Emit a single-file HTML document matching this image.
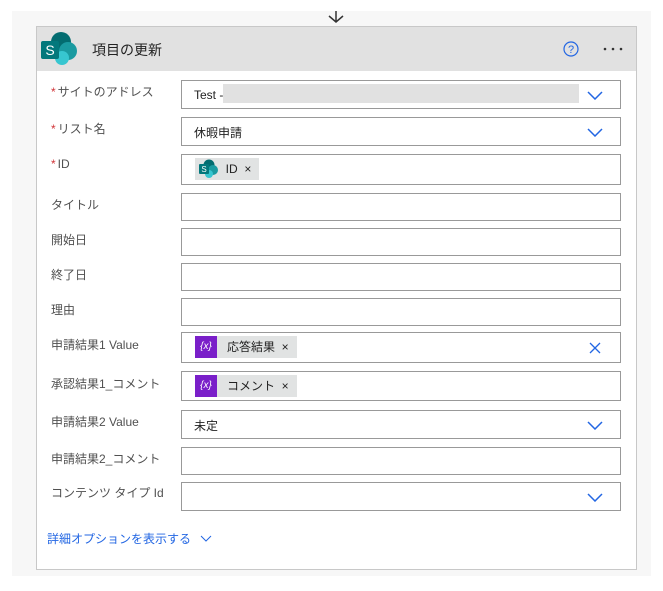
<!DOCTYPE html><html><head><meta charset="utf-8"><style>
body{margin:0;width:663px;height:591px;background:#fff;font-family:"Liberation Sans","Noto Sans CJK JP",sans-serif;position:relative;overflow:hidden}
.bg{position:absolute;left:12px;top:11px;width:639px;height:565px;background:#f7f7f7}
.card{position:absolute;left:36px;top:26px;width:599px;height:542px;background:#fff;border:1px solid #c8c8c8}
.hdr{position:absolute;left:0;top:0;width:599px;height:44px;background:#e1e1e1}
.lbl{position:absolute;left:14px;font-size:12px;color:#505050;margin-top:-2px}
.lbl b{color:#d13438;font-weight:normal;margin-right:2px}
.in{position:absolute;left:144px;width:438px;border:1px solid #999;background:#fff;font-size:12px;color:#222}
.chev{position:absolute;right:17px;top:50%;margin-top:-4px}
.tok{position:absolute;left:13px;top:3px;height:22px;background:#e1e3e3;font-size:12px;line-height:22px;padding-right:8px}
.fx{display:inline-block;width:22px;height:22px;background:#7a1fc9;color:#fff;font-size:10px;text-align:center;vertical-align:top;font-style:italic}
</style></head><body>
<div class="bg"></div>
<svg style="position:absolute;left:327px;top:10px" width="18" height="14"><path d="M9 1V12M2 6L9 12L16 6" stroke="#333" stroke-width="1.5" fill="none"/></svg>
<div class="card">
<div class="hdr">
<svg style="position:absolute;left:4px;top:4px" width="38" height="36"><circle cx="20" cy="11" r="10" fill="#036c70"/><circle cx="27" cy="20" r="9" fill="#1a9ba1"/><circle cx="21" cy="27" r="7" fill="#37c6d0"/><rect x="0" y="10" width="18" height="18" rx="2" fill="#03787c"/><text x="9" y="24" fill="#fff" font-size="14" text-anchor="middle" font-family="Liberation Sans">S</text></svg>
<div style="position:absolute;left:55px;top:13px;font-size:14px;color:#222">項目の更新</div>
<svg style="position:absolute;left:526px;top:14px" width="16" height="16"><circle cx="8" cy="8" r="7" stroke="#2266e3" fill="none" stroke-width="1.2"/><text x="8" y="12" font-size="11" fill="#2266e3" text-anchor="middle">?</text></svg>
<svg style="position:absolute;left:566px;top:20px" width="24" height="4"><circle cx="2" cy="2" r="1.3" fill="#333"/><circle cx="10" cy="2" r="1.3" fill="#333"/><circle cx="18" cy="2" r="1.3" fill="#333"/></svg>
</div>
<div class="lbl" style="top:58px"><b>*</b>サイトのアドレス</div>
<div class="in" style="top:53px;height:27px"><span style="position:absolute;left:12px;top:7px">Test -</span><div style="position:absolute;left:41px;top:3px;width:356px;height:19px;background:#e1e1e1"></div><svg class="chev" width="16" height="9"><path d="M1 1L8 8L15 1" stroke="#2266e3" fill="none" stroke-width="1.5"/></svg></div>
<div class="lbl" style="top:95px"><b>*</b>リスト名</div>
<div class="in" style="top:90px;height:27px"><span style="position:absolute;left:12px;top:6px">休暇申請</span><svg class="chev" width="16" height="9"><path d="M1 1L8 8L15 1" stroke="#2266e3" fill="none" stroke-width="1.5"/></svg></div>
<div class="lbl" style="top:132px"><b>*</b>ID</div>
<div class="in" style="top:127px;height:29px"><div class="tok" style="left:13px;padding-left:2px"><svg width="22" height="22" style="vertical-align:top"><circle cx="12" cy="7" r="5.5" fill="#036c70"/><circle cx="16" cy="12" r="5" fill="#1a9ba1"/><circle cx="12" cy="16" r="4" fill="#37c6d0"/><rect x="2" y="6" width="10" height="10" rx="1" fill="#03787c"/><text x="7" y="14" fill="#fff" font-size="8" text-anchor="middle">S</text></svg>&nbsp;&nbsp;ID&nbsp;&nbsp;×</div></div>
<div class="lbl" style="top:171px">タイトル</div>
<div class="in" style="top:166px;height:26px"></div>
<div class="lbl" style="top:206px">開始日</div>
<div class="in" style="top:201px;height:26px"></div>
<div class="lbl" style="top:241px">終了日</div>
<div class="in" style="top:236px;height:26px"></div>
<div class="lbl" style="top:276px">理由</div>
<div class="in" style="top:271px;height:26px"></div>
<div class="lbl" style="top:311px">申請結果1 Value</div>
<div class="in" style="top:305px;height:29px"><div class="tok"><span class="fx">{x}</span>&nbsp;&nbsp;&nbsp;応答結果&nbsp;&nbsp;×</div><svg style="position:absolute;right:19px;top:9px" width="12" height="12"><path d="M1 1L11 11M11 1L1 11" stroke="#2266e3" stroke-width="1.3"/></svg></div>
<div class="lbl" style="top:350px">承認結果1_コメント</div>
<div class="in" style="top:344px;height:28px"><div class="tok"><span class="fx">{x}</span>&nbsp;&nbsp;&nbsp;コメント&nbsp;&nbsp;×</div></div>
<div class="lbl" style="top:388px">申請結果2 Value</div>
<div class="in" style="top:383px;height:27px"><span style="position:absolute;left:12px;top:6px">未定</span><svg class="chev" width="16" height="9"><path d="M1 1L8 8L15 1" stroke="#2266e3" fill="none" stroke-width="1.5"/></svg></div>
<div class="lbl" style="top:425px">申請結果2_コメント</div>
<div class="in" style="top:420px;height:26px"></div>
<div class="lbl" style="top:459px">コンテンツ タイプ Id</div>
<div class="in" style="top:455px;height:27px"><svg class="chev" width="16" height="9"><path d="M1 1L8 8L15 1" stroke="#2266e3" fill="none" stroke-width="1.5"/></svg></div>
<div style="position:absolute;left:10px;top:503px;font-size:12px;color:#2266e3">詳細オプションを表示する <svg width="12" height="8" style="margin-left:6px"><path d="M1 1L6 6L11 1" stroke="#2266e3" fill="none"/></svg></div>
</div>
</body></html>
